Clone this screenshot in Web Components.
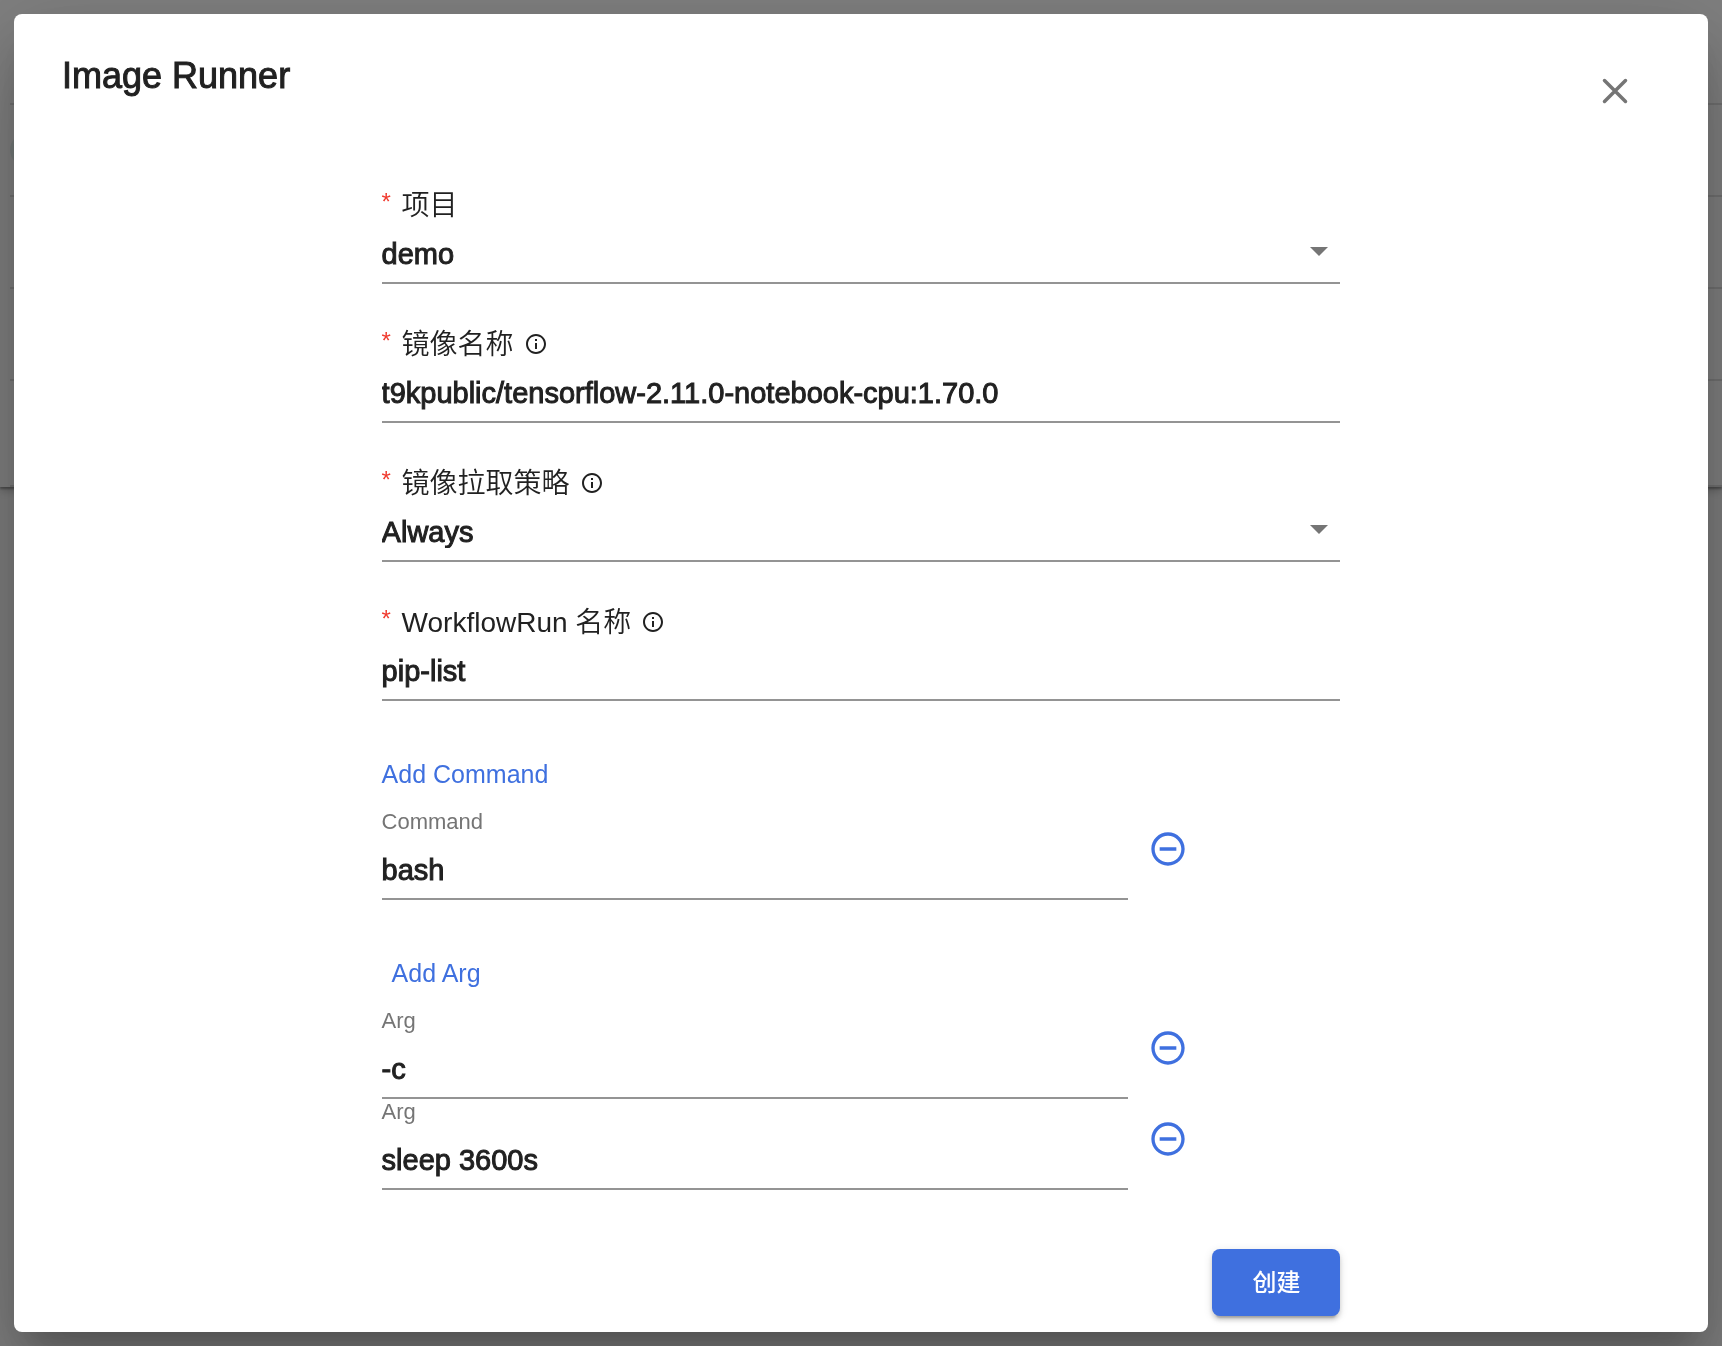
<!DOCTYPE html>
<html lang="zh-CN">
<head>
<meta charset="utf-8">
<meta name="viewport" content="width=device-width, initial-scale=1">
<title>Image Runner</title>
<style>
  :root {
    --primary: #3f70df;
    --ink: #212121;
    --muted: #757575;
    --rule: #949494;
    --danger: #f03a2e;
  }
  body {
    margin: 0;
    background: #fafafa;
    color: var(--ink);
    font-family: "Liberation Sans", "Noto Sans CJK SC", sans-serif;
    font-size: 28px;
  }
</style>
</head>
<body>
<run-list></run-list>
<modal-dialog heading="Image Runner">
  <runner-form></runner-form>
</modal-dialog>

<script>
const define = (name, html, setup) => {
  const template = document.createElement('template');
  template.innerHTML = html;
  customElements.define(name, class extends HTMLElement {
    constructor() {
      super();
      this.attachShadow({ mode: 'open' }).append(template.content.cloneNode(true));
    }
    connectedCallback() {
      if (setup) setup(this, this.shadowRoot);
    }
  });
};

/* The list of runs behind the dialog */
define('run-list', `
  <style>
    :host { display: block; position: fixed; inset: 0; overflow: hidden; }
    .card {
      background: #fff;
      padding-left: 10px;
      box-shadow: 0 2px 2px rgba(0,0,0,.3), 0 4px 8px rgba(0,0,0,.2);
    }
    .row {
      box-sizing: border-box;
      display: flex;
      align-items: center;
      height: 92px;
      border-bottom: 2px solid #e0e0e0;
    }
    .row:first-child { height: 105px; }
    .row:last-child { height: 106px; }
    .dot { width: 34px; height: 34px; border-radius: 50%; background: #e8f2f1; }
  </style>
  <div class="card">
    <div class="row"></div>
    <div class="row"><span class="dot"></span></div>
    <div class="row"></div>
    <div class="row"></div>
    <div class="row"></div>
  </div>`);

define('close-icon', `
  <style>:host { display: block; } svg { display: block; }</style>
  <svg width="32" height="32" viewBox="0 0 32 32" fill="none" stroke="currentColor" stroke-width="3.5" stroke-linecap="round" aria-hidden="true">
    <path d="M5.5 5.500L26.500 26.500M26.500 5.500L5.500 26.500"/>
  </svg>`);

define('info-icon', `
  <style>:host { display: block; } svg { display: block; }</style>
  <svg width="24" height="24" viewBox="0 0 24 24" fill="currentColor" aria-hidden="true">
    <path d="M11 7h2v2h-2zm0 4h2v6h-2zm1-9C6.480 2 2 6.480 2 12s4.480 10 10 10 10-4.480 10-10S17.520 2 12 2zm0 18c-4.410 0-8-3.590-8-8s3.590-8 8-8 8 3.590 8 8-3.590 8-8 8z"/>
  </svg>`);

define('minus-icon', `
  <style>:host { display: block; } svg { display: block; }</style>
  <svg width="40" height="40" viewBox="0 0 24 24" fill="currentColor" aria-hidden="true">
    <path d="M7 11v2h10v-2H7zm5-9C6.480 2 2 6.480 2 12s4.480 10 10 10 10-4.480 10-10S17.520 2 12 2zm0 18c-4.410 0-8-3.590-8-8s3.590-8 8-8 8 3.590 8 8-3.590 8-8 8z"/>
  </svg>`);

define('modal-dialog', `
  <style>
    :host {
      box-sizing: border-box;
      position: relative;
      display: flex;
      min-height: 100vh;
      padding: 14px;
      background: rgba(0,0,0,.5);
    }
    section {
      flex: 1;
      min-width: 0;
      box-sizing: border-box;
      padding: 32px 48px 16px;
      border-radius: 8px;
      background: #fff;
      box-shadow: 0 22px 30px -14px rgba(0,0,0,.2), 0 48px 76px 6px rgba(0,0,0,.14), 0 18px 92px 16px rgba(0,0,0,.12);
    }
    header { display: flex; justify-content: space-between; align-items: flex-start; height: 138px; }
    h1 { margin: 0; font-size: 36px; line-height: 60px; font-weight: 400; -webkit-text-stroke: 1px; }
    button {
      display: flex;
      margin: 21px 21px 0 0;
      padding: 8px;
      border: 0;
      background: none;
      color: var(--muted);
      cursor: pointer;
    }
  </style>
  <section role="dialog" aria-modal="true" aria-labelledby="title">
    <header>
      <h1 id="title"></h1>
      <button type="button" aria-label="关闭"><close-icon></close-icon></button>
    </header>
    <slot></slot>
  </section>`, (el, root) => {
  root.querySelector('h1').textContent = el.getAttribute('heading');
});

/* Labelled field: a select when it has options, else a text box */
define('form-field', `
  <style>
    :host { display: block; }
    .caption { display: flex; align-items: center; height: 40px; padding-top: 2px; margin-bottom: -2px; }
    label { display: flex; line-height: 40px; font-weight: 350; }
    .star { width: 20px; font-size: 24px; line-height: 32px; color: var(--danger); }
    info-icon { margin: 0 0 2px 10px; }
    .control { display: grid; align-items: center; border-bottom: 2px solid var(--rule); }
    input, select {
      grid-area: 1 / 1;
      box-sizing: border-box;
      width: 100%;
      height: 58px;
      margin: 0;
      padding: 2px 0 0;
      border: 0;
      outline: 0;
      appearance: none;
      background: none;
      color: inherit;
      font: inherit;
      font-size: 29px;
      -webkit-text-stroke: 1px;
    }
    svg { grid-area: 1 / 1; justify-self: end; margin: 0 12px 3px; pointer-events: none; }
  </style>
  <div class="caption">
    <label for="control"><span class="star">*</span><span class="text"></span></label>
  </div>
  <div class="control"></div>`, (el, root) => {
  root.querySelector('.text').textContent = el.getAttribute('label');
  if (el.hasAttribute('info')) root.querySelector('.caption').append(document.createElement('info-icon'));
  const box = root.querySelector('.control');
  const value = el.getAttribute('value');
  if (el.hasAttribute('options')) {
    box.innerHTML = '<select id="control" required></select>' +
      '<svg width="18" height="9" viewBox="0 0 18 9" fill="#757575" aria-hidden="true"><path d="M0 0h18L9 9z"/></svg>';
    const select = box.firstChild;
    for (const name of el.getAttribute('options').split(',')) select.add(new Option(name));
    select.value = value;
  } else {
    box.innerHTML = '<input id="control" type="text" required spellcheck="false">';
    box.firstChild.value = value;
  }
});

/* One removable command or argument */
define('entry-row', `
  <style>
    :host { display: flex; }
    .entry { width: calc(80% - 21px); border-bottom: 2px solid var(--rule); }
    label { display: block; height: 31px; font-size: 22px; line-height: 26px; color: var(--muted); }
    input {
      display: block;
      box-sizing: border-box;
      width: 100%;
      height: 58px;
      margin: 0;
      padding: 2px 0 0;
      border: 0;
      outline: 0;
      background: none;
      color: inherit;
      font: inherit;
      font-size: 29px;
      -webkit-text-stroke: 1px;
    }
    button { height: 80px; padding: 0 20px; border: 0; background: none; color: var(--primary); cursor: pointer; }
  </style>
  <div class="entry">
    <label for="control"></label>
    <input id="control" type="text" spellcheck="false">
  </div>
  <button type="button" aria-label="移除"><minus-icon></minus-icon></button>`, (el, root) => {
  root.querySelector('label').textContent = el.getAttribute('label');
  root.querySelector('input').value = el.getAttribute('value');
});

define('entry-group', `
  <style>
    :host { display: block; }
    button {
      display: block;
      height: 69px;
      margin: 0;
      padding: 0 var(--inset, 0);
      border: 0;
      background: none;
      color: var(--primary);
      font: inherit;
      font-size: 25px;
      cursor: pointer;
    }
  </style>
  <button type="button"></button>
  <slot></slot>`, (el, root) => {
  root.querySelector('button').textContent = el.getAttribute('action');
});

define('primary-button', `
  <style>
    :host { display: block; }
    button {
      display: block;
      height: 67px;
      padding: 0 40px 4px;
      border: 0;
      border-radius: 8px;
      background: var(--primary);
      color: #fff;
      font: inherit;
      font-size: 24px;
      font-weight: 500;
      box-shadow: 0 6px 2px -4px rgba(0,0,0,.2), 0 4px 4px rgba(0,0,0,.14), 0 2px 10px rgba(0,0,0,.12);
      cursor: pointer;
    }
  </style>
  <button type="submit"><slot></slot></button>`);

define('runner-form', `
  <style>
    :host { display: block; width: 60%; margin: 0 auto; }
    form { display: flex; flex-direction: column; gap: 39px; }
    .args { --inset: 10px; }
    footer { display: flex; justify-content: flex-end; padding-top: 20px; }
  </style>
  <form>
    <form-field label="项目" value="demo" options="demo"></form-field>
    <form-field label="镜像名称" value="t9kpublic/tensorflow-2.11.0-notebook-cpu:1.70.0" info></form-field>
    <form-field label="镜像拉取策略" value="Always" options="Always,IfNotPresent,Never" info></form-field>
    <form-field label="WorkflowRun 名称" value="pip-list" info></form-field>
    <entry-group action="Add Command">
      <entry-row label="Command" value="bash"></entry-row>
    </entry-group>
    <entry-group class="args" action="Add Arg">
      <entry-row label="Arg" value="-c"></entry-row>
      <entry-row label="Arg" value="sleep 3600s"></entry-row>
    </entry-group>
    <footer><primary-button>创建</primary-button></footer>
  </form>`);
</script>
</body>
</html>
